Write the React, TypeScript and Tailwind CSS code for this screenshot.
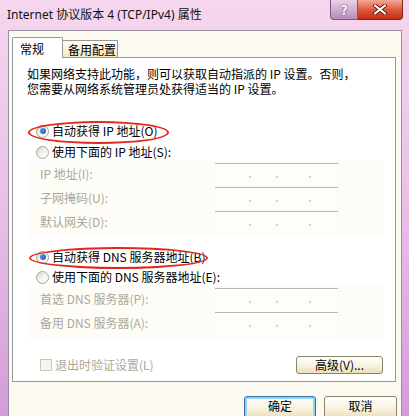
import React from 'react';

const body = "font-['Noto_Sans_CJK_SC',sans-serif]";

function Radio({ checked }: { checked?: boolean }) {
  return (
    <span className="w-[13px] h-[13px] shrink-0 rounded-full border border-[#aaa896] bg-gradient-to-br from-[#d8d6c8] via-[#f4f3ec] to-white flex items-center justify-center">
      {checked && <span className="w-[6px] h-[6px] rounded-full bg-gradient-to-br from-[#5aa6f0] to-[#1a56b8]" />}
    </span>
  );
}

function IpBox() {
  return (
    <div className="w-[123px] h-[22px] border-t border-[#b9b7ac] bg-[#fefdf7] flex items-start pt-[12px]">
      <span className="ml-[34px] w-[2px] h-[2px] bg-[#d6d2c4]" />
      <span className="ml-[25px] w-[2px] h-[2px] bg-[#d6d2c4]" />
      <span className="ml-[31px] w-[2px] h-[2px] bg-[#d6d2c4]" />
    </div>
  );
}

function FieldRow({ label }: { label: string }) {
  return (
    <div className="h-[24px] flex items-start">
      <div className="w-[187px] pl-[12px] h-[22px] leading-[22px] text-[#aca899]">{label}</div>
      <IpBox />
    </div>
  );
}

function XpButton({ children, w, focus }: { children: React.ReactNode; w: string; focus?: boolean }) {
  return (
    <button
      className={`${w} h-[23px] rounded-[3px] border ${
        focus ? 'border-[#3a6ea5] shadow-[inset_0_0_0_2px_#8fd2f4]' : 'border-[#8a8468]'
      } bg-gradient-to-b from-[#fffffb] via-[#f8f4e4] to-[#ecdfb8] text-[12px] leading-[14px] text-black flex justify-center items-start pt-[2px]`}
    >
      {children}
    </button>
  );
}

export default function App() {
  return (
    <div className={`relative w-[409px] h-[416px] overflow-hidden flex flex-col bg-gradient-to-b from-[#f6d6ee] via-[#e8c0e6] to-[#d29cd9] ${body} text-[12px] text-black`}>
      {/* Title bar */}
      <div className="h-[30px] shrink-0 flex items-start">
        <div className="pl-[7px] pt-[7px] leading-[16px] font-['Noto_Sans','Noto_Sans_CJK_SC',sans-serif] text-[12px] text-[#111]">
          Internet 协议版本 4 (TCP/IPv4) 属性
        </div>
        <div className="ml-auto mr-[6px] flex">
          <div className="w-[28px] h-[20px] rounded-bl-[4px] border border-t-0 border-[#7a5a7c] bg-gradient-to-b from-[#ead2e8] via-[#cfb0d0] to-[#b48ab8] flex items-center justify-center text-white font-bold text-[13px] leading-none [text-shadow:0_0_2px_#4a2a4c]">
            ?
          </div>
          <div className="w-[45px] h-[20px] rounded-br-[4px] border border-t-0 border-l-0 border-[#7a2a20] bg-gradient-to-b from-[#f2a898] via-[#e05a3a] to-[#c22c12] flex items-center justify-center">
            <svg width="14" height="11" viewBox="0 0 14 11">
              <path d="M2 1.5 L12 9.5 M12 1.5 L2 9.5" stroke="#6a1a10" strokeWidth="4" strokeLinecap="round" />
              <path d="M2 1.5 L12 9.5 M12 1.5 L2 9.5" stroke="#ffffff" strokeWidth="2.2" strokeLinecap="round" />
            </svg>
          </div>
        </div>
      </div>

      {/* Client area */}
      <div className="flex-1 ml-[8px] mr-[7px] bg-[#fbf9f0] border-l border-t border-r border-[#9d8fa2] pl-[3px] pt-[6px]">
        {/* Tabs */}
        <div className="flex items-end h-[20px] relative z-10">
          <div className="w-[51px] h-[21px] -mb-px bg-white border border-b-0 border-[#919b9c] rounded-t-[2px] pl-[7px] pt-[3px] leading-[16px]">
            常规
          </div>
          <div className="w-[55px] h-[17px] border border-b-0 border-l-0 border-[#919b9c] bg-gradient-to-b from-[#fffdf2] to-[#f6e8c4] pl-[5px] pt-[1px] leading-[16px]">
            备用配置
          </div>
        </div>

        {/* Panel */}
        <div className="w-[384px] h-[325px] bg-white border border-[#919b9c] flex flex-col">
          <div className="mt-[8px] ml-[14px] leading-[15px]">
            <div>如果网络支持此功能，则可以获取自动指派的 IP 设置。否则，</div>
            <div>您需要从网络系统管理员处获得适当的 IP 设置。</div>
          </div>

          <div className="mt-[26px] ml-[23px] h-[18px] flex items-center gap-[3px]">
            <Radio checked />
            <span>自动获得 IP 地址(O)</span>
          </div>
          <div className="mt-[3px] ml-[23px] h-[18px] flex items-center gap-[3px]">
            <Radio />
            <span>使用下面的 IP 地址(S):</span>
          </div>

          <div className="ml-[15px] mr-[11px] pt-[2px] pb-[2px] bg-[#fdfcf6]">
            <FieldRow label="IP 地址(I):" />
            <FieldRow label="子网掩码(U):" />
            <FieldRow label="默认网关(D):" />
          </div>

          <div className="mt-[11px] ml-[23px] h-[18px] flex items-center gap-[3px]">
            <Radio checked />
            <span>自动获得 DNS 服务器地址(B)</span>
          </div>
          <div className="mt-[2px] ml-[23px] h-[18px] flex items-center gap-[3px]">
            <Radio />
            <span>使用下面的 DNS 服务器地址(E):</span>
          </div>

          <div className="ml-[15px] mr-[11px] pt-[2px] pb-[3px] bg-[#fdfcf6]">
            <FieldRow label="首选 DNS 服务器(P):" />
            <FieldRow label="备用 DNS 服务器(A):" />
          </div>

          <div className="mt-[16px] ml-[27px] mr-[12px] h-[19px] flex items-center">
            <span className="w-[12px] h-[12px] border border-[#c9c7ba] bg-[#f6f5ee]" />
            <span className="ml-[3px] text-[#aca899]">退出时验证设置(L)</span>
            <button className="ml-auto w-[87px] h-[18px] rounded-[3px] border border-[#8a8468] bg-gradient-to-b from-[#fffffb] via-[#f8f4e4] to-[#ecdfb8] text-[12px] leading-[16px] text-black">
              高级(V)...
            </button>
          </div>
        </div>

        {/* Dialog buttons */}
        <div className="w-[385px] mt-[14px] flex justify-end gap-[8px]">
          <XpButton w="w-[72px]" focus>确定</XpButton>
          <XpButton w="w-[73px]">取消</XpButton>
        </div>
      </div>

      {/* Red annotation ellipses */}
      <div className="absolute left-[28px] top-[121px] w-[141px] h-[23px] rounded-[50%] border-[2.5px] border-[#e0281c]" />
      <div className="absolute left-[29px] top-[247px] w-[179px] h-[22px] rounded-[50%] border-[2.5px] border-[#e0281c]" />
    </div>
  );
}
